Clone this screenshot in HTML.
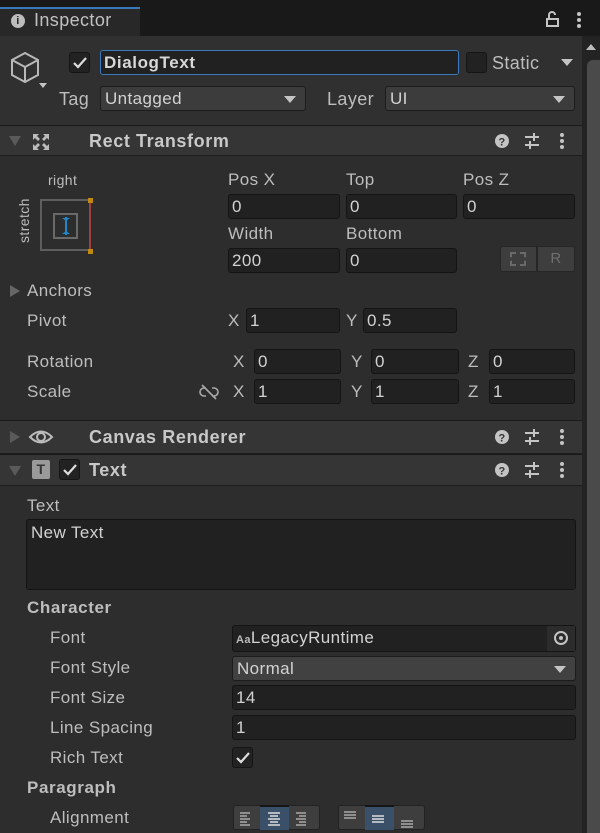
<!DOCTYPE html>
<html><head><meta charset="utf-8"><style>
*{margin:0;padding:0;box-sizing:border-box}
body{width:600px;height:833px;overflow:hidden;background:#2d2d2d;font-family:"Liberation Sans",sans-serif;font-size:17px;letter-spacing:0.4px;color:#c4c4c4;position:relative}
.a{position:absolute;white-space:nowrap}
.f{position:absolute;background:#212121;border:1px solid #141414;border-radius:3px;height:25px;padding:2px 0 0 3px;color:#d2d2d2}
.dd{position:absolute;background:#3c3c3c;border:1px solid #1c1c1c;border-radius:3px;height:25px;padding:2px 0 0 4px;color:#d2d2d2}
.dd::after{content:"";position:absolute;right:9px;top:9px;border-left:6px solid transparent;border-right:6px solid transparent;border-top:7px solid #c4c4c4}
.hdr{position:absolute;left:0;width:582px;height:31px;background:#353535;border-top:1px solid #1a1a1a;border-bottom:1px solid #1e1e1e}
.b{font-weight:bold;letter-spacing:0.6px}
.cb{position:absolute;width:21px;height:21px;background:#222;border:1px solid #151515;border-radius:3px}
.lab{color:#bdbdbd}
</style></head><body>
<div class="a" style="left:0;top:0;width:600px;height:36px;background:#191919"></div>
<div class="a" style="left:0;top:7px;width:140px;height:29px;background:#282828;border-top:2px solid #3a79bb"></div>
<div class="a" style="left:11px;top:14px;width:14px;height:14px;border-radius:50%;background:#bdbdbd;color:#282828;font-size:11px;font-weight:bold;text-align:center;line-height:14px">i</div>
<div class="a" style="left:34px;top:10px;font-size:18px;color:#c0c0c0">Inspector</div>
<svg class="a" style="left:546px;top:11px" width="14" height="16"><path d="M3 8V4a3 3 0 0 1 6 0" stroke="#c4c4c4" stroke-width="2" fill="none"/><rect x="1" y="8" width="11" height="7" fill="none" stroke="#c4c4c4" stroke-width="2"/></svg>
<svg class="a" style="left:576px;top:11px" width="6" height="18"><circle cx="3" cy="3" r="2" fill="#c4c4c4"/><circle cx="3" cy="9" r="2" fill="#c4c4c4"/><circle cx="3" cy="15" r="2" fill="#c4c4c4"/></svg>
<div class="a" style="left:582px;top:36px;width:18px;height:797px;background:#232323"></div>
<div class="a" style="left:586px;top:44px;border-left:5px solid transparent;border-right:5px solid transparent;border-bottom:6px solid #bbb"></div>
<div class="a" style="left:587px;top:60px;width:13px;height:773px;background:#4a4a4a;border-radius:6px 0 0 0"></div>
<div class="a" style="left:0;top:36px;width:582px;height:89px;background:#303030"></div>
<svg class="a" style="left:8px;top:50px" width="42" height="42"><path d="M17 3L30 10V25L17 32L4 25V10Z M4 10L17 17L30 10 M17 17V32" fill="none" stroke="#b8b8b8" stroke-width="2"/><path d="M31 33h8l-4 5z" fill="#c4c4c4"/></svg>
<div class="cb" style="left:69px;top:52px"></div>
<svg class="a" style="left:72px;top:56px" width="16" height="14"><path d="M2 7l4 4 8-9" stroke="#ddd" stroke-width="2.2" fill="none"/></svg>
<div class="a" style="left:100px;top:50px;width:359px;height:25px;background:#212121;border:1px solid #3a79bb;border-radius:3px;padding:2px 0 0 3px;font-weight:bold;color:#d8d8d8;letter-spacing:0.6px">DialogText</div>
<div class="cb" style="left:466px;top:52px"></div>
<div class="a lab" style="left:492px;top:53px;font-size:18px">Static</div>
<div class="a" style="left:561px;top:59px;border-left:6px solid transparent;border-right:6px solid transparent;border-top:7px solid #c4c4c4"></div>
<div class="a lab" style="left:59px;top:89px;font-size:18px">Tag</div>
<div class="dd" style="left:100px;top:86px;width:206px">Untagged</div>
<div class="a lab" style="left:327px;top:89px;font-size:18px">Layer</div>
<div class="dd" style="left:385px;top:86px;width:190px">UI</div>
<div class="hdr" style="top:125px"></div>
<div class="a" style="left:9px;top:136px;border-left:6px solid transparent;border-right:6px solid transparent;border-top:10px solid #5a5a5a"></div>
<svg class="a" style="left:31px;top:132px" width="20" height="20" fill="#bbb"><path d="M2 2h6l-2 2 3 3-2 2-3-3-2 2z"/><path d="M18 2v6l-2-2-3 3-2-2 3-3-2-2z"/><path d="M2 18v-6l2 2 3-3 2 2-3 3 2 2z"/><path d="M18 18h-6l2-2-3-3 2-2 3 3 2-2z"/></svg>
<div class="a b" style="left:89px;top:131px;font-size:18px;color:#c8c8c8">Rect Transform</div>
<div class="a lab" style="left:48px;top:172px;font-size:14px">right</div>
<div class="a lab" style="left:4px;top:215px;font-size:14px;transform:rotate(-90deg);transform-origin:center;width:40px;text-align:center">stretch</div>
<div class="a" style="left:40px;top:199px;width:51px;height:52px;border:2px solid #5e5e5e;border-right:none"></div>
<div class="a" style="left:89px;top:199px;width:2px;height:52px;background:#a04040"></div>
<div class="a" style="left:88px;top:198px;width:5px;height:5px;background:#c08a10"></div>
<div class="a" style="left:88px;top:249px;width:5px;height:5px;background:#c08a10"></div>
<div class="a" style="left:53px;top:213px;width:25px;height:26px;border:2px solid #6a6a6a"></div>
<svg class="a" style="left:58px;top:213px" width="16" height="26"><path d="M8 4v18" stroke="#1e88c8" stroke-width="2"/><path d="M4 5h8l-4 3zM4 21h8l-4-3z" fill="#1e88c8"/></svg>
<div class="a lab" style="left:228px;top:170px">Pos X</div>
<div class="a lab" style="left:346px;top:170px">Top</div>
<div class="a lab" style="left:463px;top:170px">Pos Z</div>
<div class="f" style="left:228px;top:194px;width:112px">0</div>
<div class="f" style="left:346px;top:194px;width:111px">0</div>
<div class="f" style="left:463px;top:194px;width:112px">0</div>
<div class="a lab" style="left:228px;top:224px">Width</div>
<div class="a lab" style="left:346px;top:224px">Bottom</div>
<div class="f" style="left:228px;top:248px;width:112px">200</div>
<div class="f" style="left:346px;top:248px;width:111px">0</div>
<div class="a" style="left:500px;top:246px;width:37px;height:26px;background:#3e3e3e;border-radius:3px 0 0 3px;border:1px solid #262626"></div>
<div class="a" style="left:510px;top:252px;width:16px;height:14px;border:2px dashed #6a6a6a"></div>
<div class="a" style="left:537px;top:246px;width:38px;height:26px;background:#3e3e3e;border-radius:0 3px 3px 0;border:1px solid #262626;color:#6e6e6e;font-size:15px;text-align:center;padding-top:3px">R</div>
<div class="a" style="left:10px;top:285px;border-top:6px solid transparent;border-bottom:6px solid transparent;border-left:10px solid #666"></div>
<div class="a lab" style="left:27px;top:281px">Anchors</div>
<div class="a lab" style="left:27px;top:311px">Pivot</div>
<div class="a lab" style="left:228px;top:311px">X</div>
<div class="f" style="left:246px;top:308px;width:94px">1</div>
<div class="a lab" style="left:346px;top:311px">Y</div>
<div class="f" style="left:363px;top:308px;width:94px">0.5</div>
<div class="a lab" style="left:27px;top:352px">Rotation</div>
<div class="a lab" style="left:27px;top:382px">Scale</div>
<svg class="a" style="left:199px;top:384px" width="20" height="16"><path d="M7 4h-2a4 4 0 0 0 0 8h2M13 4h2a4 4 0 0 1 0 8h-2M3 1l14 14" stroke="#aaa" stroke-width="1.6" fill="none"/></svg>
<div class="a lab" style="left:233px;top:352px">X</div><div class="f" style="left:254px;top:349px;width:87px">0</div>
<div class="a lab" style="left:351px;top:352px">Y</div><div class="f" style="left:371px;top:349px;width:88px">0</div>
<div class="a lab" style="left:468px;top:352px">Z</div><div class="f" style="left:489px;top:349px;width:86px">0</div>
<div class="a lab" style="left:233px;top:382px">X</div><div class="f" style="left:254px;top:379px;width:87px">1</div>
<div class="a lab" style="left:351px;top:382px">Y</div><div class="f" style="left:371px;top:379px;width:88px">1</div>
<div class="a lab" style="left:468px;top:382px">Z</div><div class="f" style="left:489px;top:379px;width:86px">1</div>
<div class="hdr" style="top:420px;height:34px"></div>
<div class="a" style="left:10px;top:431px;border-top:6px solid transparent;border-bottom:6px solid transparent;border-left:10px solid #5a5a5a"></div>
<svg class="a" style="left:28px;top:427px" width="26" height="20"><path d="M2 10Q13 -1 24 10Q13 21 2 10Z" fill="none" stroke="#bbb" stroke-width="2"/><circle cx="13" cy="10" r="4" fill="none" stroke="#bbb" stroke-width="2"/></svg>
<div class="a b" style="left:89px;top:427px;font-size:18px;color:#c8c8c8">Canvas Renderer</div>
<div class="hdr" style="top:454px;height:32px"></div>
<div class="a" style="left:9px;top:466px;border-left:6px solid transparent;border-right:6px solid transparent;border-top:10px solid #5a5a5a"></div>
<div class="a" style="left:32px;top:460px;width:18px;height:19px;background:#9a9a9a;border-radius:2px;color:#353535;font-weight:bold;font-size:14px;text-align:center;line-height:19px">T</div>
<div class="cb" style="left:59px;top:459px"></div>
<svg class="a" style="left:62px;top:463px" width="16" height="14"><path d="M2 7l4 4 8-9" stroke="#ddd" stroke-width="2.2" fill="none"/></svg>
<div class="a b" style="left:89px;top:460px;font-size:18px;color:#c8c8c8">Text</div>
<svg class="a" style="left:0;top:0" width="582" height="500">
<g id="ic">
<circle cx="502" cy="141" r="7" fill="#c4c4c4"/><text x="502" y="145.5" font-size="11" font-weight="bold" fill="#353535" text-anchor="middle" font-family="Liberation Sans">?</text>
<path d="M525 137h14M525 145h14M534 133v8M530 141v8" stroke="#c4c4c4" stroke-width="2"/>
<circle cx="562" cy="135" r="2" fill="#c4c4c4"/><circle cx="562" cy="141" r="2" fill="#c4c4c4"/><circle cx="562" cy="147" r="2" fill="#c4c4c4"/>
</g>
<use href="#ic" y="296"/>
<use href="#ic" y="329"/>
</svg>
<div class="a lab" style="left:27px;top:496px">Text</div>
<div class="a" style="left:26px;top:519px;width:550px;height:71px;background:#212121;border:1px solid #141414;border-radius:3px;padding:3px 4px;color:#d2d2d2">New Text</div>
<div class="a b lab" style="left:27px;top:598px">Character</div>
<div class="a lab" style="left:50px;top:628px">Font</div>
<div class="f" style="left:232px;top:625px;width:344px;height:27px"><span style="font-size:11px;font-weight:bold;color:#bbb">Aa</span>LegacyRuntime</div>
<div class="a" style="left:547px;top:626px;width:28px;height:25px;background:#2c2c2c"></div>
<div class="a" style="left:554px;top:631px;width:14px;height:14px;border:2px solid #c4c4c4;border-radius:50%"></div>
<div class="a" style="left:559px;top:636px;width:4px;height:4px;background:#c4c4c4;border-radius:50%"></div>
<div class="a lab" style="left:50px;top:658px">Font Style</div>
<div class="dd" style="left:232px;top:656px;width:344px;background:#414141">Normal</div>
<div class="a lab" style="left:50px;top:688px">Font Size</div>
<div class="f" style="left:232px;top:685px;width:344px">14</div>
<div class="a lab" style="left:50px;top:718px">Line Spacing</div>
<div class="f" style="left:232px;top:715px;width:344px">1</div>
<div class="a lab" style="left:50px;top:748px">Rich Text</div>
<div class="cb" style="left:232px;top:747px"></div>
<svg class="a" style="left:235px;top:751px" width="16" height="14"><path d="M2 7l4 4 8-9" stroke="#ddd" stroke-width="2.2" fill="none"/></svg>
<div class="a b lab" style="left:27px;top:778px">Paragraph</div>
<div class="a lab" style="left:50px;top:808px">Alignment</div>
<div class="a" style="left:233px;top:805px;width:87px;height:25px;background:#3e3e3e;border:1px solid #222;border-radius:3px"></div>
<div class="a" style="left:260px;top:805px;width:29px;height:25px;background:#3a5068;border-top:2px solid #151515"></div>
<div class="a" style="left:338px;top:805px;width:87px;height:25px;background:#3e3e3e;border:1px solid #222;border-radius:3px"></div>
<div class="a" style="left:365px;top:805px;width:29px;height:25px;background:#3a5068;border-top:2px solid #151515"></div>
<svg class="a" style="left:233px;top:805px" width="200" height="28" stroke="#aaa" stroke-width="1.5">
<path d="M7 8h10M7 11h7M7 14h10M7 17h7M7 20h10"/>
<path d="M35 8h12M37 11h8M35 14h12M37 17h8M35 20h12" stroke="#ddd"/>
<path d="M63 8h10M66 11h7M63 14h10M66 17h7M63 20h10"/>
<path d="M111 7h12M111 10h12M111 13h12"/>
<path d="M139 11h12M139 14h12M139 17h12" stroke="#ddd"/>
<path d="M168 16h12M168 19h12M168 22h12"/>
</svg>
</body></html>
